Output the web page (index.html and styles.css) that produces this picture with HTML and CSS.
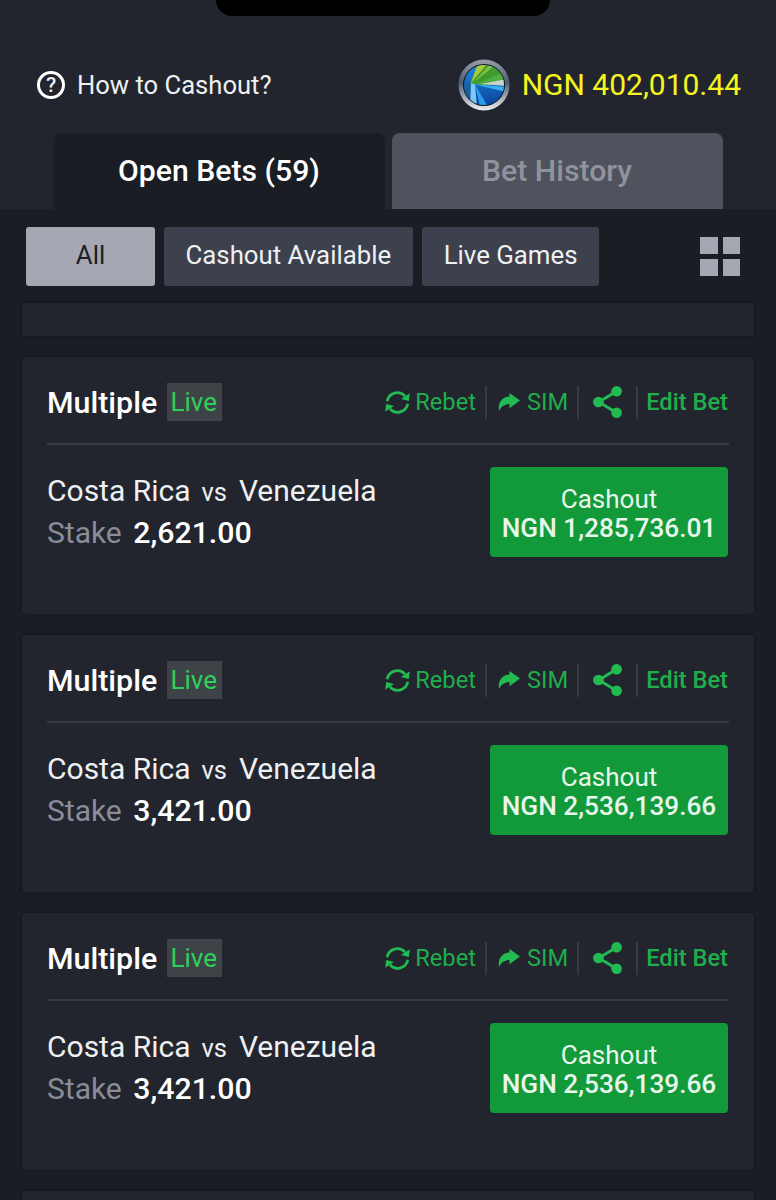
FILE: index.html
```html
<!DOCTYPE html>
<html>
<head>
    <title>Open Bets</title>
    <link rel="stylesheet" href="styles.css">
</head>
<body>
    <svg class="sprites" width="0" height="0">
        <symbol id="i-rebet" viewBox="0 0 25 23">
            <path d="M2.2 10.2A10.3 10.3 0 0 1 20 5.2" fill="none" stroke="currentColor" stroke-width="2.7"/>
            <path d="M24.8 2.2L23.8 10 16 8z" fill="currentColor"/>
            <path d="M22.8 12.8A10.3 10.3 0 0 1 5 17.8" fill="none" stroke="currentColor" stroke-width="2.7"/>
            <path d="M.2 20.8L1.2 13 9 15z" fill="currentColor"/>
        </symbol>
        <symbol id="i-sim" viewBox="0 0 22 18">
            <path d="M11.5 0L22 7.6 11.5 15.2V11C7 11 3.5 13 1 18-.4 10 4 4 11.5 3.6z" fill="currentColor"/>
        </symbol>
        <symbol id="i-share" viewBox="1.4 1.3 28.3 31.4">
            <path d="M24.5 6.5L7 17 24.5 27.5" fill="none" stroke="currentColor" stroke-width="2.8"/>
            <circle cx="24.5" cy="6.5" r="5.2" fill="currentColor"/>
            <circle cx="6.6" cy="17" r="5.2" fill="currentColor"/>
            <circle cx="24.5" cy="27.5" r="5.2" fill="currentColor"/>
        </symbol>
    </svg>

    <div class="top">
        <div class="notch"></div>
        <div class="info-row">
            <div class="help">
                <span class="help-icon">?</span>
                <span>How to Cashout?</span>
            </div>
            <div class="balance">
                <svg class="coin" viewBox="0 0 52 52">
                    <defs>
                        <linearGradient id="ring" x1="0" y1="0" x2="0" y2="1">
                            <stop offset="0" stop-color="#9a9fa9"/>
                            <stop offset="0.45" stop-color="#4d5c70"/>
                            <stop offset="1" stop-color="#eceff2"/>
                        </linearGradient>
                        <linearGradient id="sea" x1="0" y1="0" x2="0" y2="1">
                            <stop offset="0" stop-color="#1c8fe0"/>
                            <stop offset="1" stop-color="#0b3f9c"/>
                        </linearGradient>
                        <clipPath id="disc"><circle cx="26" cy="26" r="20"/></clipPath>
                    </defs>
                    <circle cx="26" cy="26" r="25.5" fill="url(#ring)"/>
                    <circle cx="26" cy="26" r="21" fill="#10141c"/>
                    <g clip-path="url(#disc)">
                        <rect x="4" y="4" width="44" height="44" fill="url(#sea)"/>
                        <path d="M12 24L22 2H52V26H24z" fill="#3f9a2c"/>
                        <path d="M13 24L20 4H30z" fill="#a8c93a"/>
                        <path d="M15 24L33 4H40z" fill="#7cc242"/>
                        <path d="M18 25L48 12V20z" fill="#4fae3f"/>
                        <path d="M22 25L48 20V27z" fill="#c9d4c6"/>
                        <path d="M4 24L13 24 10 48H4z" fill="#15639f"/>
                        <path d="M13 24L17 25 19 48H12z" fill="#7ec8f2"/>
                        <path d="M15 25L48 28V33z" fill="#38b0f0"/>
                        <path d="M17 25L30 48H22z" fill="#2a9be8"/>
                    </g>
                </svg>
                <span class="amount">NGN 402,010.44</span>
            </div>
        </div>
        <div class="tabs">
            <div class="tab tab-active">Open Bets (59)</div>
            <div class="tab tab-off">Bet History</div>
        </div>
    </div>

    <div class="filters">
        <div class="pill pill-on">All</div>
        <div class="pill">Cashout Available</div>
        <div class="pill">Live Games</div>
        <div class="grid-icon"><i></i><i></i><i></i><i></i></div>
    </div>

    <div class="list">
        <div class="card card-stub"></div>

        <div class="card">
            <div class="card-head">
                <span class="kind">Multiple</span>
                <span class="live">Live</span>
                <div class="actions">
                    <span class="act act-rebet"><svg class="ico-rebet"><use href="#i-rebet"/></svg>Rebet</span>
                    <span class="act act-sim"><svg class="ico-sim"><use href="#i-sim"/></svg>SIM</span>
                    <span class="act act-share"><svg class="ico-share"><use href="#i-share"/></svg></span>
                    <span class="act act-edit">Edit Bet</span>
                </div>
            </div>
            <div class="card-body">
                <div class="match">
                    <div class="teams">Costa Rica <small>vs</small> Venezuela</div>
                    <div class="stake"><span>Stake</span> <b>2,621.00</b></div>
                </div>
                <div class="cashout">Cashout<b>NGN 1,285,736.01</b></div>
            </div>
        </div>

        <div class="card">
            <div class="card-head">
                <span class="kind">Multiple</span>
                <span class="live">Live</span>
                <div class="actions">
                    <span class="act act-rebet"><svg class="ico-rebet"><use href="#i-rebet"/></svg>Rebet</span>
                    <span class="act act-sim"><svg class="ico-sim"><use href="#i-sim"/></svg>SIM</span>
                    <span class="act act-share"><svg class="ico-share"><use href="#i-share"/></svg></span>
                    <span class="act act-edit">Edit Bet</span>
                </div>
            </div>
            <div class="card-body">
                <div class="match">
                    <div class="teams">Costa Rica <small>vs</small> Venezuela</div>
                    <div class="stake"><span>Stake</span> <b>3,421.00</b></div>
                </div>
                <div class="cashout">Cashout<b>NGN 2,536,139.66</b></div>
            </div>
        </div>

        <div class="card">
            <div class="card-head">
                <span class="kind">Multiple</span>
                <span class="live">Live</span>
                <div class="actions">
                    <span class="act act-rebet"><svg class="ico-rebet"><use href="#i-rebet"/></svg>Rebet</span>
                    <span class="act act-sim"><svg class="ico-sim"><use href="#i-sim"/></svg>SIM</span>
                    <span class="act act-share"><svg class="ico-share"><use href="#i-share"/></svg></span>
                    <span class="act act-edit">Edit Bet</span>
                </div>
            </div>
            <div class="card-body">
                <div class="match">
                    <div class="teams">Costa Rica <small>vs</small> Venezuela</div>
                    <div class="stake"><span>Stake</span> <b>3,421.00</b></div>
                </div>
                <div class="cashout">Cashout<b>NGN 2,536,139.66</b></div>
            </div>
        </div>

        <div class="card card-next"></div>
    </div>
</body>
</html>
```

FILE: styles.css
```css
html, body {
    margin: 0;
    height: 1200px;
    overflow: hidden;
}

body {
    font-family: Roboto, "Liberation Sans", sans-serif;
    background: #1a1d24;
    color: #fff;
}

.sprites {
    display: block;
    height: 0;
}

.top {
    height: 209px;
    background: #22252e;
    display: flex;
    flex-direction: column;
    align-items: center;
}

.notch {
    align-self: flex-start;
    margin-left: 216px;
    width: 334px;
    height: 16px;
    background: #000;
    border-radius: 0 0 24px 24px;
}

.info-row {
    width: 100%;
    box-sizing: border-box;
    display: flex;
    justify-content: space-between;
    align-items: center;
    height: 52px;
    margin-top: 43px;
    padding: 0 35px 0 37px;
}

.help {
    display: flex;
    align-items: center;
    gap: 12px;
    font-size: 25.6px;
    color: #eef0f2;
}

.help-icon {
    width: 22px;
    height: 22px;
    border: 3px solid #fff;
    border-radius: 50%;
    display: flex;
    align-items: center;
    justify-content: center;
    font-size: 21px;
    font-weight: 500;
}

.balance {
    display: flex;
    align-items: center;
    gap: 12px;
    font-size: 30px;
    color: #f6f51e;
}

.amount {
    padding-bottom: 2px;
}

.coin {
    width: 52px;
    height: 52px;
}

.tabs {
    display: flex;
    gap: 7px;
    margin-top: 22px;
    flex: 1;
}

.tab {
    width: 331px;
    border-radius: 8px 8px 0 0;
    display: flex;
    align-items: center;
    justify-content: center;
    font-size: 30.2px;
    font-weight: 500;
    padding-bottom: 2px;
    box-sizing: border-box;
}

.tab-active {
    background: #1a1d24;
}

.tab-off {
    background: #50535e;
    color: #90939d;
}

.filters {
    display: flex;
    align-items: center;
    gap: 8.5px;
    padding: 18px 36px 0 26px;
    height: 59px;
}

.pill {
    height: 59px;
    padding: 0 22px 3px;
    box-sizing: border-box;
    display: flex;
    align-items: center;
    background: #3d414e;
    border-radius: 3px;
    font-size: 25.8px;
    color: #eef0f2;
}

.pill-on {
    width: 129px;
    padding: 0 0 3px;
    justify-content: center;
    background: #a5a8b3;
    color: #1d2028;
}

.grid-icon {
    margin-left: auto;
    width: 40px;
    height: 39px;
    display: grid;
    grid-template-columns: 1fr 1fr;
    grid-template-rows: 1fr 1fr;
    gap: 5px;
}

.grid-icon i {
    background: #a5a8b3;
}

.list {
    padding: 17px 22px 0;
    display: flex;
    flex-direction: column;
    gap: 21px;
}

.card {
    height: 257px;
    flex: none;
    box-sizing: border-box;
    padding: 0 25px;
    background: #22252e;
    border-radius: 4px;
    box-shadow: 0 0 3px rgba(0, 0, 0, 0.3);
}

.card-stub {
    height: 33px;
    border-radius: 0 0 4px 4px;
}

.card-next {
    height: 9px;
    border-radius: 4px 4px 0 0;
}

.card-head {
    height: 88px;
    display: flex;
    align-items: center;
    border-bottom: 2px solid #373a45;
    padding-top: 4px;
    box-sizing: border-box;
}

.kind {
    font-size: 30.4px;
    font-weight: 500;
}

.live {
    margin-left: 10px;
    width: 55px;
    height: 38px;
    padding-right: 2px;
    box-sizing: border-box;
    display: flex;
    align-items: center;
    justify-content: center;
    background: #3d4347;
    color: #2fd05a;
    font-size: 26px;
}

.actions {
    margin-left: auto;
    display: flex;
    align-items: center;
    color: #1fae4b;
    font-size: 23.7px;
}

.actions svg {
    color: #22bb52;
}

.act {
    display: flex;
    align-items: center;
    height: 33px;
    padding: 0 9px 0 11px;
    border-right: 2px solid #373a45;
}

.act-rebet {
    gap: 5px;
}

.act-sim {
    gap: 7px;
}

.act-share {
    padding: 0 14px;
}

.act-edit {
    border-right: 0;
    padding: 0 1px 0 8px;
    font-weight: 500;
}

.ico-rebet {
    width: 25px;
    height: 23px;
}

.ico-sim {
    width: 22px;
    height: 18px;
}

.ico-share {
    width: 29px;
    height: 32px;
}

.card-body {
    display: flex;
    justify-content: space-between;
    padding-top: 22px;
}

.match {
    padding-top: 3px;
}

.teams {
    font-size: 30px;
    line-height: 42px;
    color: #eef0f2;
}

.teams small {
    font-size: 25.5px;
    line-height: 1;
    margin: 0 4.5px 0 3.5px;
}

.stake {
    font-size: 30px;
    line-height: 42px;
}

.stake span {
    color: #8a8d97;
}

.stake b {
    font-size: 30.3px;
    line-height: 1;
    font-weight: 500;
    margin-left: 4px;
}

.cashout {
    width: 238px;
    height: 90px;
    margin-right: 1px;
    box-sizing: border-box;
    padding-top: 3px;
    background: #129a3a;
    border-radius: 4px;
    display: flex;
    flex-direction: column;
    align-items: center;
    justify-content: center;
    font-size: 26px;
    line-height: 29px;
    color: #e8f6ec;
}

.cashout b {
    font-size: 26.2px;
    font-weight: 500;
}
```
